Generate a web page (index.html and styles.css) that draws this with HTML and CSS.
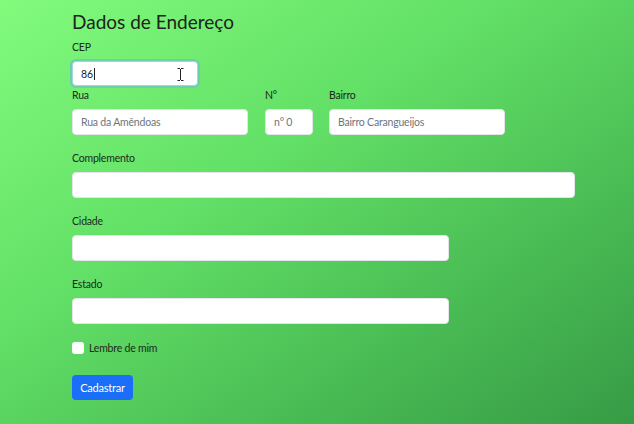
FILE: index.html
```html
<!DOCTYPE html>
<html lang="pt-BR">
<head>
<meta charset="utf-8">
<title>Dados de Endereço</title>
<link rel="stylesheet" href="styles.css">
</head>
<body>
<main class="page">
  <h2 class="title">Dados de Endereço</h2>
  <form class="form">
    <div class="group group-cep">
      <label class="label" for="cep">CEP</label>
      <div class="cep-wrap">
        <div class="input input-cep focus" id="cep"><span class="value">86</span><span class="caret"></span></div>
        <svg class="ibeam" width="7" height="13" viewBox="0 0 7 13"><path d="M0.5 0.5h2.5M4 0.5h2.5M3.5 1v11M0.5 12.5h2.5M4 12.5h2.5" stroke="#222" stroke-width="1" fill="none"/></svg>
      </div>
    </div>
    <div class="row">
      <div class="group w-rua">
        <label class="label">Rua</label>
        <div class="input"><span class="ph">Rua da Amêndoas</span></div>
      </div>
      <div class="group w-num">
        <label class="label">N°</label>
        <div class="input"><span class="ph">n° 0</span></div>
      </div>
      <div class="group w-bairro">
        <label class="label">Bairro</label>
        <div class="input"><span class="ph">Bairro Carangueijos</span></div>
      </div>
    </div>
    <div class="group">
      <label class="label">Complemento</label>
      <div class="input w-full"></div>
    </div>
    <div class="group">
      <label class="label">Cidade</label>
      <div class="input w-wide"></div>
    </div>
    <div class="group">
      <label class="label">Estado</label>
      <div class="input w-wide"></div>
    </div>
    <div class="check">
      <span class="box"></span>
      <span class="check-label">Lembre de mim</span>
    </div>
    <button type="button" class="btn">Cadastrar</button>
  </form>
</main>
</body>
</html>
```

FILE: styles.css
```css
html, body {
  margin: 0;
  height: 100%;
}
body {
  background: linear-gradient(to bottom right, #82fb7d 0%, #62df66 40%, #47b852 75%, #379b46 100%);
  font-family: "Gill Sans", Lato, "Open Sans", sans-serif;
  color: #1b2b1c;
  overflow: hidden;
}
.page {
  padding: 10px 0 0 72px;
}
.title {
  margin: 0 0 6px;
  font-size: 19px;
  font-weight: 400;
  line-height: 24px;
  color: #1a241a;
}
.form {
  display: flex;
  flex-direction: column;
}
.group {
  display: flex;
  flex-direction: column;
  margin-bottom: 16px;
}
.group-cep {
  margin-bottom: 2px;
}
.label {
  font-size: 10.5px;
  letter-spacing: -0.2px;
  line-height: 15px;
  margin-bottom: 6px;
}
.row {
  display: flex;
}
.w-rua { width: 176px; margin-right: 17px; }
.w-num { width: 48px; margin-right: 16px; }
.w-bairro { width: 176px; }
.w-full { width: 503px; }
.w-wide { width: 377px; }
.input {
  box-sizing: border-box;
  height: 26px;
  background: #fff;
  border: 1px solid #e2e6ea;
  border-radius: 4px;
  display: flex;
  align-items: center;
  padding: 0 8px;
  font-size: 10.5px;
  letter-spacing: -0.2px;
  color: #212529;
}
.ph {
  color: #6c757d;
}
.cep-wrap {
  position: relative;
  width: 126px;
}
.input-cep {
  width: 126px;
  height: 25px;
  padding-left: 8px;
}
.focus {
  border: 1px solid #9fd9d2;
  box-shadow: 0 0 0 2px rgba(110, 200, 185, 0.85);
}
.caret {
  display: inline-block;
  width: 1px;
  height: 12px;
  background: #222;
  margin-left: 1px;
}
.ibeam {
  position: absolute;
  left: 105px;
  top: 7px;
}
.check {
  display: flex;
  align-items: center;
  gap: 5px;
  margin-top: 1px;
  margin-bottom: 20px;
}
.box {
  width: 12px;
  height: 12px;
  background: #fff;
  border-radius: 3px;
}
.check-label {
  font-size: 10.5px;
  letter-spacing: -0.2px;
  line-height: 14px;
}
.btn {
  align-self: flex-start;
  width: 61px;
  height: 25px;
  background: #1a6ef7;
  border: 0;
  border-radius: 4px;
  color: #fff;
  font-family: inherit;
  font-size: 11px;
  letter-spacing: -0.2px;
  padding: 0;
}
```
